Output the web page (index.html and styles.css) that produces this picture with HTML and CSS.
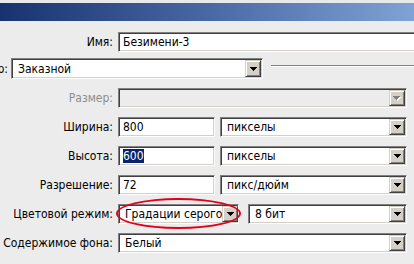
FILE: index.html
```html
<!DOCTYPE html>
<html lang="ru">
<head>
  <meta charset="UTF-8">
  <meta name="viewport" content="width=device-width, initial-scale=1.0">
  <title>Новый</title>
  <link rel="stylesheet" href="styles.css">
</head>
<body>
  <div class="window">
    <div class="titlebar"></div>

    <div class="form">
      <div class="row row-name">
        <div class="label">Имя:</div>
        <div class="field sunken field-name">Безимени-3</div>
      </div>

      <div class="row row-preset">
        <div class="label label-preset">Набор:</div>
        <div class="select sunken select-preset">
          <span class="value">Заказной</span>
          <span class="drop"><svg width="7" height="4" viewBox="0 0 7 4"><path d="M0 0h7v1H0zM1 1h5v1H1zM2 2h3v1H2zM3 3h1v1H3z"/></svg></span>
        </div>
        <div class="groove"></div>
      </div>

      <div class="row">
        <div class="label disabled">Размер:</div>
        <div class="select sunken select-wide is-disabled">
          <span class="value"></span>
          <span class="drop"><svg width="8" height="5" viewBox="0 0 8 5"><path fill="#fff" d="M1 1h7v1H1zM2 2h5v1H2zM3 3h3v1H3zM4 4h1v1H4z"/><path fill="#808080" d="M0 0h7v1H0zM1 1h5v1H1zM2 2h3v1H2zM3 3h1v1H3z"/></svg></span>
        </div>
      </div>

      <div class="row">
        <div class="label">Ширина:</div>
        <div class="field sunken field-num">800</div>
        <div class="select sunken select-unit">
          <span class="value">пикселы</span>
          <span class="drop"><svg width="7" height="4" viewBox="0 0 7 4"><path d="M0 0h7v1H0zM1 1h5v1H1zM2 2h3v1H2zM3 3h1v1H3z"/></svg></span>
        </div>
      </div>

      <div class="row">
        <div class="label">Высота:</div>
        <div class="field sunken field-num"><span class="selected">600</span></div>
        <div class="select sunken select-unit">
          <span class="value">пикселы</span>
          <span class="drop"><svg width="7" height="4" viewBox="0 0 7 4"><path d="M0 0h7v1H0zM1 1h5v1H1zM2 2h3v1H2zM3 3h1v1H3z"/></svg></span>
        </div>
      </div>

      <div class="row">
        <div class="label">Разрешение:</div>
        <div class="field sunken field-num">72</div>
        <div class="select sunken select-unit">
          <span class="value">пикс/дюйм</span>
          <span class="drop"><svg width="7" height="4" viewBox="0 0 7 4"><path d="M0 0h7v1H0zM1 1h5v1H1zM2 2h3v1H2zM3 3h1v1H3z"/></svg></span>
        </div>
      </div>

      <div class="row">
        <div class="label">Цветовой режим:</div>
        <div class="select sunken select-mode">
          <span class="value">Градации серого</span>
          <span class="drop"><svg width="7" height="4" viewBox="0 0 7 4"><path d="M0 0h7v1H0zM1 1h5v1H1zM2 2h3v1H2zM3 3h1v1H3z"/></svg></span>
        </div>
        <div class="select sunken select-depth">
          <span class="value">8 бит</span>
          <span class="drop"><svg width="7" height="4" viewBox="0 0 7 4"><path d="M0 0h7v1H0zM1 1h5v1H1zM2 2h3v1H2zM3 3h1v1H3z"/></svg></span>
        </div>
      </div>

      <div class="row">
        <div class="label">Содержимое фона:</div>
        <div class="select sunken select-wide">
          <span class="value">Белый</span>
          <span class="drop"><svg width="7" height="4" viewBox="0 0 7 4"><path d="M0 0h7v1H0zM1 1h5v1H1zM2 2h3v1H2zM3 3h1v1H3z"/></svg></span>
        </div>
      </div>
    </div>

    <!-- red marker drawn over the colour mode select -->
    <div class="marker"></div>
  </div>
</body>
</html>
```

FILE: styles.css
```css
* {
  margin: 0;
  padding: 0;
  box-sizing: border-box;
}

body {
  width: 414px;
  height: 264px;
  overflow: hidden;
  background: #ececec;
  font-family: "DejaVu Sans", Verdana, sans-serif;
  font-stretch: semi-condensed;
  font-size: 12px;
  color: #000;
}

.window {
  position: relative;
  height: 264px;
}

.titlebar {
  height: 21px;
  border-top: 3px solid #e9e9e9;
  background: linear-gradient(to right, #17326f 0%, #4868a4 50%, #7fa3d4 100%);
}

.form {
  display: flex;
  flex-direction: column;
  gap: 9px;
  padding-top: 11px;
}

.row {
  display: flex;
  align-items: center;
  gap: 5px;
  height: 20px;
}

.row-name {
  margin-bottom: -3px;
}

.row-preset {
  height: 21px;
  gap: 3px;
}

.label {
  flex-shrink: 0;
  width: 113px;
  display: flex;
  justify-content: flex-end;
  white-space: nowrap;
}

.label-preset {
  width: 8px;
}

.label.disabled {
  color: #8c8c8c;
}

/* classic sunken edit box */
.sunken {
  height: 100%;
  background: #fff;
  border: 1px solid;
  border-color: #808080 #fff #fff #808080;
  box-shadow: inset 1px 1px 0 #404040, inset -1px -1px 0 #d4d0c8;
  padding: 1px;
  white-space: nowrap;
  overflow: hidden;
}

.field {
  display: flex;
  align-items: center;
  padding-left: 4px;
}

.field-name {
  flex-shrink: 0;
  width: 310px;
}

.field-num {
  width: 97px;
}

.selected {
  background: #0a246a;
  color: #fff;
}

.select {
  display: flex;
  align-items: stretch;
}

.select .value {
  flex: 1;
  display: flex;
  align-items: center;
  padding-left: 5px;
}

.drop {
  width: 16px;
  flex-shrink: 0;
  background: #d4d0c8;
  border: 1px solid;
  border-color: #d4d0c8 #404040 #404040 #d4d0c8;
  box-shadow: inset 1px 1px 0 #fff, inset -1px -1px 0 #808080;
  display: flex;
  align-items: center;
  justify-content: center;
}

.drop svg {
  display: block;
}

.select-preset {
  width: 252px;
}

.groove {
  flex: 1;
  margin-left: 5px;
  border-top: 1px solid #808080;
  border-bottom: 1px solid #fff;
  margin-top: -5px;
}

.select-wide {
  width: 289px;
}

.select.is-disabled {
  background: #ececec;
}

.select-unit {
  width: 187px;
}

.select-mode {
  width: 121px;
}

.select-depth {
  width: 159px;
  margin-left: 4px;
}

.marker {
  position: absolute;
  left: 116px;
  top: 198px;
  width: 125px;
  height: 31px;
  border: 2px solid #e3001b;
  border-radius: 50%;
}
```
